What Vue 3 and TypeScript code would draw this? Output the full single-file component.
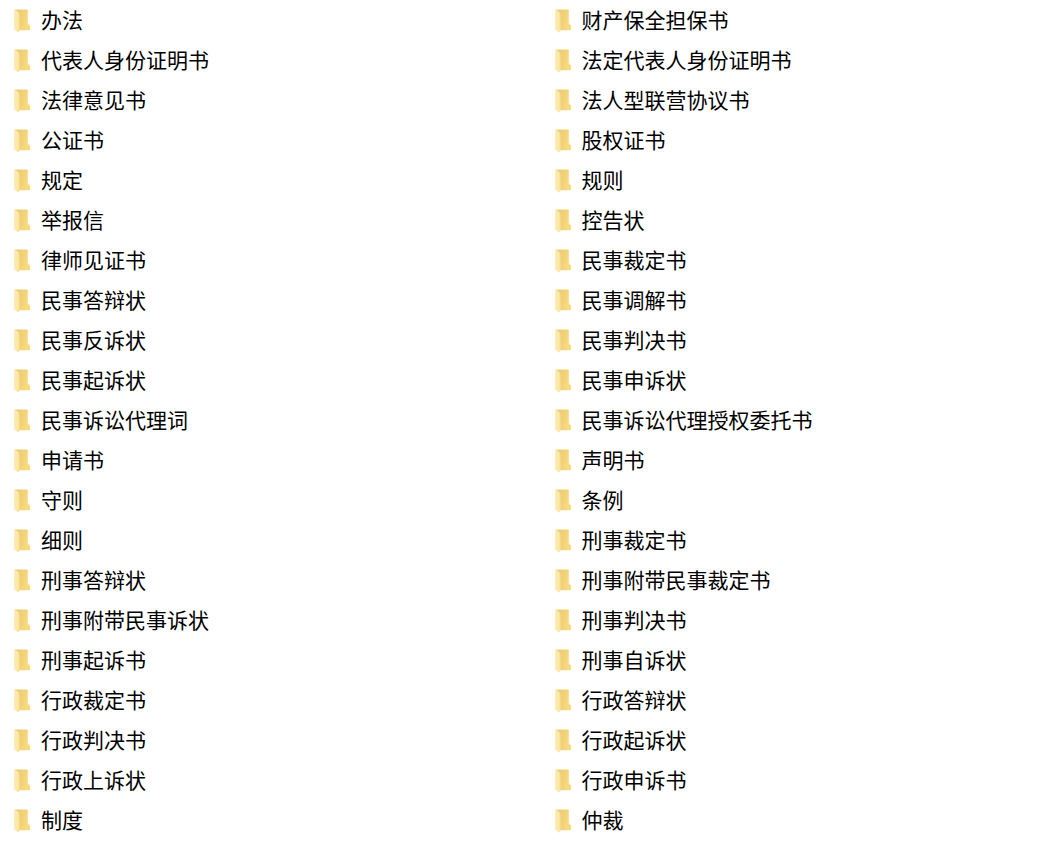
<script setup lang="ts">
const folders: string[] = [
  '办法', '财产保全担保书',
  '代表人身份证明书', '法定代表人身份证明书',
  '法律意见书', '法人型联营协议书',
  '公证书', '股权证书',
  '规定', '规则',
  '举报信', '控告状',
  '律师见证书', '民事裁定书',
  '民事答辩状', '民事调解书',
  '民事反诉状', '民事判决书',
  '民事起诉状', '民事申诉状',
  '民事诉讼代理词', '民事诉讼代理授权委托书',
  '申请书', '声明书',
  '守则', '条例',
  '细则', '刑事裁定书',
  '刑事答辩状', '刑事附带民事裁定书',
  '刑事附带民事诉状', '刑事判决书',
  '刑事起诉书', '刑事自诉状',
  '行政裁定书', '行政答辩状',
  '行政判决书', '行政起诉状',
  '行政上诉状', '行政申诉书',
  '制度', '仲裁',
]
</script>

<template>
  <svg class="defs" aria-hidden="true">
    <defs>
      <linearGradient id="folder-flap" x1="0" y1="0" x2="1" y2="0">
        <stop offset="0" stop-color="#fbe8a8" />
        <stop offset="0.5" stop-color="#fdeaae" />
        <stop offset="1" stop-color="#fbdf8e" />
      </linearGradient>
      <linearGradient id="folder-body" x1="0" y1="0" x2="1" y2="0.3">
        <stop offset="0" stop-color="#e6c878" />
        <stop offset="0.5" stop-color="#f0d078" />
        <stop offset="1" stop-color="#fadb7c" />
      </linearGradient>
    </defs>
  </svg>
  <ul class="folders">
    <li v-for="name in folders" :key="name" class="folder">
      <svg class="icon" viewBox="0 -2 17 26" aria-hidden="true">
        <path d="M1 0.4H13Q13.8 0.4 13.8 1.2V14.6L16 16.4V20.4Q16 21.2 15.2 21.2H4Z" fill="url(#folder-body)" />
        <path d="M0.2 1.2Q0.2 0.4 1.1 0.6L4.2 3Q5.6 4 5.6 5.4V21.2L4.9 22.8Q4.5 23.8 3.7 23.2L0.8 20.8Q0.2 20.3 0.2 19.6Z" fill="url(#folder-flap)" />
      </svg>
      <span class="name">{{ name }}</span>
    </li>
  </ul>
</template>

<style>
body {
  margin: 0;
  background: #fff;
}
</style>

<style scoped>
.defs {
  position: absolute;
  width: 0;
  height: 0;
}

.folders {
  display: grid;
  grid-template-columns: 51% 49%;
  grid-auto-rows: 40px;
  margin: 0;
  padding: 0;
  list-style: none;
  font-family: "Noto Sans CJK SC", sans-serif;
  font-size: 21px;
  line-height: 38px;
  color: #000;
}

.folder {
  display: flex;
  align-items: flex-start;
  gap: 10px;
  padding-left: 14px;
}

.icon {
  flex: none;
  align-self: center;
  width: 17px;
  height: 26px;
}

.name {
  white-space: nowrap;
}
</style>
